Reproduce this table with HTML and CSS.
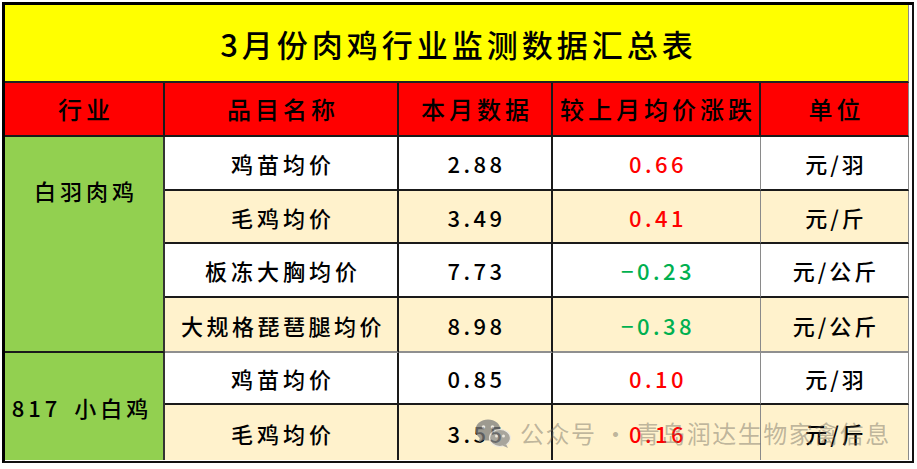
FILE: index.html
```html
<!DOCTYPE html>
<html lang="zh-CN">
<head>
<meta charset="utf-8">
<title>3月份肉鸡行业监测数据汇总表</title>
<link rel="stylesheet" href="styles.css">
</head>
<body>
<div class="sheet">
  <div class="grid">
    <div class="cell title">3月份肉鸡行业监测数据汇总表</div>

    <div class="cell hd">行业</div>
    <div class="cell hd">品目名称</div>
    <div class="cell hd">本月数据</div>
    <div class="cell hd">较上月均价涨跌</div>
    <div class="cell hd hd-last">单位</div>

    <div class="cell ind ind-top">白羽肉鸡</div>
    <div class="cell name">鸡苗均价</div>
    <div class="cell num">2.88</div>
    <div class="cell chg up">0.66</div>
    <div class="cell unit">元/羽</div>

    <div class="cell name alt">毛鸡均价</div>
    <div class="cell num alt">3.49</div>
    <div class="cell chg up alt">0.41</div>
    <div class="cell unit alt">元/斤</div>

    <div class="cell name">板冻大胸均价</div>
    <div class="cell num">7.73</div>
    <div class="cell chg down">−0.23</div>
    <div class="cell unit">元/公斤</div>

    <div class="cell name alt thin-b narrow">大规格琵琶腿均价</div>
    <div class="cell num alt thin-b">8.98</div>
    <div class="cell chg down alt thin-b">−0.38</div>
    <div class="cell unit alt thin-b">元/公斤</div>

    <div class="cell ind ind-bottom">817 小白鸡</div>
    <div class="cell name">鸡苗均价</div>
    <div class="cell num">0.85</div>
    <div class="cell chg up">0.10</div>
    <div class="cell unit">元/羽</div>

    <div class="cell name alt last">毛鸡均价</div>
    <div class="cell num alt last">3.55</div>
    <div class="cell chg up alt last">0.16</div>
    <div class="cell unit alt last">元/斤</div>
  </div>

  <div class="watermark">
    <svg class="wm-icon" width="36" height="30" viewBox="0 0 36 30" aria-hidden="true">
      <ellipse cx="13" cy="12" rx="12.5" ry="10.5" fill="#7d7d7d"/>
      <path d="M5 19 L3.5 25 L10 21 Z" fill="#7d7d7d"/>
      <circle cx="8.5" cy="9" r="1.8" fill="#e6e6e6"/>
      <circle cx="17.5" cy="9" r="1.8" fill="#e6e6e6"/>
      <ellipse cx="25" cy="20" rx="10.5" ry="8.5" fill="#8c8c8c" stroke="#e8e8e8" stroke-width="1.2"/>
      <path d="M31 26 L33 30 L27.5 27.5 Z" fill="#8c8c8c"/>
      <circle cx="21.5" cy="18" r="1.5" fill="#e6e6e6"/>
      <circle cx="28.5" cy="18" r="1.5" fill="#e6e6e6"/>
    </svg>
    <span class="wm-text">公众号 · 青岛润达生物家禽信息</span>
  </div>
</div>
</body>
</html>
```

FILE: styles.css
```css
* {
  box-sizing: border-box;
}

html, body {
  margin: 0;
  padding: 0;
  background: #ffffff;
}

body {
  font-family: "Noto Sans CJK SC", "Noto Sans", sans-serif;
  color: #000;
}

.sheet {
  position: relative;
  width: 912px;
  margin: 2px 0 0 2px;
  border-left: 3px solid #000;
  border-top: 3px solid #000;
  border-right: 2px solid #111;
  border-bottom: 2px solid #111;
  padding: 0 2px 1px 0;
  background: #fff;
}

.grid {
  display: grid;
  grid-template-columns: 160px 234px 154px 208px 148px;
  grid-template-rows: 78px 54px 54px 53px 54px 55px 52px 55px;
}

.cell {
  display: flex;
  align-items: center;
  justify-content: center;
  border-right: 2px solid #1a1a1a;
  border-bottom: 2px solid #1a1a1a;
  font-size: 22px;
  font-weight: 500;
  letter-spacing: 4px;
  white-space: nowrap;
  background: #fff;
  line-height: 1;
}

.title {
  grid-column: 1 / 6;
  background: #ffff00;
  font-size: 31px;
  letter-spacing: 4px;
  padding-left: 4px;
  border-right: 1px solid #8a8a8a;
  border-bottom: 2px solid #222;
}

.hd {
  background: #ff0000;
  font-size: 24px;
  letter-spacing: 4px;
  padding-left: 4px;
}

.hd-last {
  border-right: 1px solid #8a8a8a;
}

.ind {
  background: #92d050;
  border-right: 2px solid #333;
  padding-left: 4px;
}

.ind-top {
  grid-row: 3 / 7;
  align-items: flex-start;
  padding-top: 42px;
}

.ind-bottom {
  grid-row: 7 / 9;
  border-bottom: none;
  letter-spacing: 4px;
  word-spacing: 4px;
  padding-left: 0;
  padding-right: 4px;
}

.name {
  padding-left: 4px;
}

.narrow {
  letter-spacing: 3.5px;
}

.num {
  letter-spacing: 3.5px;
  padding-left: 3px;
}

.chg {
  font-weight: 500;
  letter-spacing: 3.5px;
  padding-left: 3px;
  border-right-color: #8a8a8a;
  border-right-width: 1px;
}

.up {
  color: #ff0000;
}

.down {
  color: #00b050;
}

.unit {
  border-right: 1px solid #8a8a8a;
  letter-spacing: 3px;
  padding-left: 3px;
}

.alt {
  background: #fff2cc;
}

.thin-b {
  border-bottom-color: #8f8f8f;
}

.last {
  border-bottom: none;
}

.watermark {
  position: absolute;
  left: 470px;
  top: 410px;
  display: flex;
  align-items: center;
  gap: 9px;
  pointer-events: none;
}

.wm-icon {
  display: block;
  opacity: 0.75;
}

.wm-text {
  font-size: 24px;
  font-weight: 400;
  letter-spacing: 1.5px;
  color: rgba(110, 105, 95, 0.45);
  white-space: nowrap;
}
```
